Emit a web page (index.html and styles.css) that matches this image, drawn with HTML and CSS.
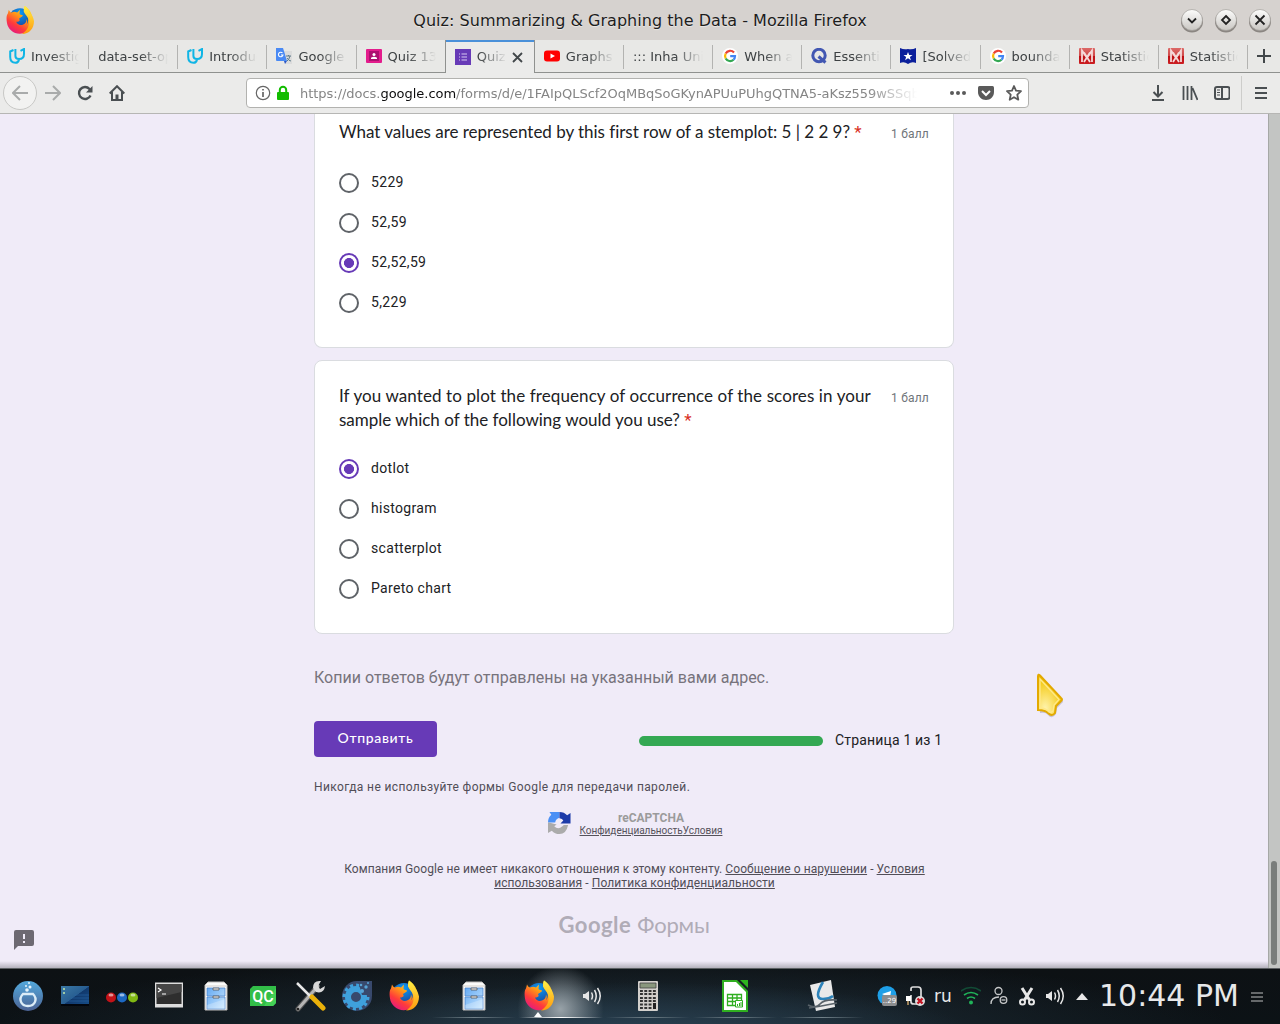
FILE: index.html
```html
<!DOCTYPE html>
<html lang="ru">
<head>
<meta charset="utf-8">
<title>Quiz: Summarizing &amp; Graphing the Data</title>
<link rel="stylesheet" href="styles.css">
</head>
<body>
<svg class="defs" aria-hidden="true">
  <defs>
    <linearGradient id="ffg" x1=".8" y1="0" x2=".2" y2="1"><stop offset="0" stop-color="#ffe733"/><stop offset=".4" stop-color="#ff9a16"/><stop offset=".7" stop-color="#ff3b3b"/><stop offset="1" stop-color="#e1148b"/></linearGradient>
    <linearGradient id="ffy" x1="0" y1="0" x2="0" y2="1"><stop offset="0" stop-color="#fff046"/><stop offset="1" stop-color="#ff980e"/></linearGradient>
    <radialGradient id="ffb" cx=".5" cy=".2" r=".8"><stop offset="0" stop-color="#0a9bf5"/><stop offset="1" stop-color="#20287e"/></radialGradient>
    <linearGradient id="btn" x1="0" y1="0" x2="0" y2="1"><stop offset="0" stop-color="#fdfdfc"/><stop offset="1" stop-color="#c9c6c2"/></linearGradient>
    <linearGradient id="blue" x1="0" y1="0" x2="0" y2="1"><stop offset="0" stop-color="#53a9dc"/><stop offset="1" stop-color="#4b6294"/></linearGradient>
    <linearGradient id="desk" x1="0" y1="0" x2="1" y2="1"><stop offset="0" stop-color="#3b79a6"/><stop offset=".5" stop-color="#285e91"/><stop offset=".52" stop-color="#11396d"/><stop offset="1" stop-color="#174e88"/></linearGradient>
    <linearGradient id="drawer" x1="0" y1="0" x2="1" y2="1"><stop offset="0" stop-color="#64a9f2"/><stop offset="1" stop-color="#c9e7ff"/></linearGradient>
    <linearGradient id="mred" x1="0" y1="0" x2="0" y2="1"><stop offset="0" stop-color="#dc6a68"/><stop offset=".5" stop-color="#cf4747"/><stop offset=".52" stop-color="#bd0f14"/><stop offset="1" stop-color="#cc1f22"/></linearGradient>
    <radialGradient id="gold" cx=".3" cy=".85" r=".8"><stop offset="0" stop-color="#fff4b0"/><stop offset="1" stop-color="#f3c400"/></radialGradient>
    <symbol id="firefox" viewBox="0 0 30 30">
      <circle cx="15" cy="15.500" r="13" fill="url(#ffb)"/>
      <path d="M3 4c1 2 2 3 3 3 2-1 4-1 6 0l3-3c0 2-1 4 0 5l3 1c0 2-3 2-4 4 2 2-1 3-3 3 1 3 4 4 7 3 3-1 4-3 4-6 1 2 1 4 0 6 3-4 2-9-1-12-2-2-2-5-1-8 5 3 7 7 8 11 2 8-2 15-9 18C11 32 2 26 1 18 0 12 1 9 2 8z" fill="url(#ffg)"/>
      <path d="M20 0c3 2 5 5 6 8 2 1 3 4 4 8 0 8-5 14-13 14 6-4 9-9 7-16-1-3-4-5-5-8 0-2 0-4 1-6z" fill="url(#ffy)"/>
    </symbol>
    <symbol id="udacity" viewBox="0 0 16 16"><path d="M4.500 2 1.200 3.500V9q0 5.800 5.300 5.800 3 0 3.500-3.300M6.400 1v7q0 3 3.600 3 5 0 5-5V1l-3.500 1.800" fill="none" stroke="#10b5e5" stroke-width="2"/></symbol>
    <symbol id="google" viewBox="0 0 16 16"><circle cx="8" cy="8" r="8" fill="#fff"/><g fill="none" stroke-width="2.200"><path d="M12 4.500A5 5 0 0 0 3.700 5.600" stroke="#ea4335"/><path d="M3.700 5.600a5 5 0 0 0 0 4.800" stroke="#fbbc05"/><path d="M3.700 10.400a5 5 0 0 0 7.800 1.300" stroke="#34a853"/><path d="M11.500 11.700A5 5 0 0 0 13 8.200H8.200" stroke="#4285f4"/></g></symbol>
    <symbol id="mathred" viewBox="0 0 16 16"><rect width="16" height="16" rx="1" fill="url(#mred)"/><path d="M3 14V2.500L8 10l5-7.500V14M5 14l6-9.500M11 14 5 4.500" fill="none" stroke="#f5dada" stroke-width="1.800"/></symbol>
    <symbol id="cabinet" viewBox="0 0 24 30"><path d="M1 4 4 1h16l3 3v25H1z" fill="#fbfbfa" stroke="#bcbab8"/><path d="M2 5h20" stroke="#d4d0cc"/><path d="M3 7h18v8H3zM3 16h18v12H3z" fill="url(#drawer)" stroke="#4680c8" stroke-width=".7"/><path d="M3 24 21 18v10H3z" fill="#fff" opacity=".25"/><path d="M9 7v2h6V7zM9 15v2h6v-2z" fill="#eee" stroke="#555" stroke-width=".8"/></symbol>
    <symbol id="speaker" viewBox="0 0 20 20"><path d="M1 8h2l4-3v10l-4-3H1z" fill="#e6e6e6"/><g fill="none" stroke="#e6e6e6" stroke-width="1.500"><path d="M9.500 6.500q2 3.500 0 7M12.500 4q3.500 6 0 12M15.500 2q5.500 8 0 16"/></g></symbol>
  </defs>
</svg>
<div class="screen">
  <header class="titlebar">
    <svg class="app-icon" width="28" height="28"><use href="#firefox"/></svg>
    <div class="window-title">Quiz: Summarizing &amp; Graphing the Data - Mozilla Firefox</div>
    <div class="window-buttons">
      <svg viewBox="0 0 24 25"><ellipse cx="12" cy="13.500" rx="11" ry="11" fill="#8b8682"/><circle cx="12" cy="12" r="10.500" fill="url(#btn)" stroke="#a19d99" stroke-width=".7"/><path d="m8 10.500 4 4 4-4" class="glyph"/></svg>
      <svg viewBox="0 0 24 25"><ellipse cx="12" cy="13.500" rx="11" ry="11" fill="#8b8682"/><circle cx="12" cy="12" r="10.500" fill="url(#btn)" stroke="#a19d99" stroke-width=".7"/><path d="m12 8 4 4-4 4-4-4z" class="glyph"/></svg>
      <svg viewBox="0 0 24 25"><ellipse cx="12" cy="13.500" rx="11" ry="11" fill="#8b8682"/><circle cx="12" cy="12" r="10.500" fill="url(#btn)" stroke="#a19d99" stroke-width=".7"/><path d="m7.500 7.500 9 9m0-9-9 9" class="glyph"/></svg>
    </div>
  </header>
  <nav class="tabs">
    <div class="tab"><svg><use href="#udacity"/></svg><span>Investig</span></div>
    <div class="tab"><span>data-set-op</span></div>
    <div class="tab"><svg><use href="#udacity"/></svg><span>Introduc</span></div>
    <div class="tab"><svg viewBox="0 0 16 16"><path d="M6 3h10v13H9z" fill="#dcdcdc"/><path d="M0 0h7l4 13H1a1 1 0 0 1-1-1z" fill="#4a8af4"/><path d="M8 13h3l-2 3z" fill="#2a56c6"/><path d="M6.500 5A2.300 2.300 0 1 0 7 7H5" fill="none" stroke="#fff" stroke-width="1.100"/><path d="M10 8h5m-2.500-1v1M14 8q-1 4-3 5m0-3q2 3 4 3" fill="none" stroke="#607d8b"/></svg><span>Google</span></div>
    <div class="tab last-before"><svg viewBox="0 0 16 16"><rect y="1" width="16" height="14" rx="1" fill="#e31c8c"/><path d="M3 3h10v10H3z" fill="#ad1070"/><circle cx="8" cy="6.500" r="1.500" fill="#fff"/><path d="M5 11V9.800Q8 7.500 11 9.800V11z" fill="#fff"/></svg><span>Quiz 13</span></div>
    <div class="tab active"><svg viewBox="0 0 16 16"><path d="M0 0h16v16H0z" fill="#673ab7"/><path d="M4 5h1m1.500 0H12M4 8h1m1.500 0H12M4 11h1m1.500 0H12" stroke="#d8c8f3" stroke-width="1.200"/></svg><span>Quiz:</span><svg class="close" viewBox="0 0 16 16"><path d="m4 4 9 9m0-9-9 9"/></svg></div>
    <div class="tab"><svg viewBox="0 0 16 16"><rect y="2.500" width="16" height="11" rx="3" fill="#f00"/><path d="m6.500 5.500 4.500 2.500-4.500 2.500z" fill="#fff"/></svg><span>Graphs:</span></div>
    <div class="tab"><span>::: Inha Univ</span></div>
    <div class="tab"><svg><use href="#google"/></svg><span>When a</span></div>
    <div class="tab"><svg viewBox="0 0 16 16"><circle cx="8" cy="7.500" r="6.200" fill="none" stroke="#4257b2" stroke-width="3"/><path d="m7.500 8.500 7 6" stroke="#4257b2" stroke-width="3"/></svg><span>Essentia</span></div>
    <div class="tab"><svg viewBox="0 0 16 16"><path d="M0 0q4 2 8 1 4 1 8-1v15q-4-2-8 1-4-3-8-1z" fill="#0b1f9b"/><path d="m8 4 1.200 3h3.300l-2.600 2 1 3.200L8 10.300l-2.900 1.900 1-3.200-2.600-2h3.300z" fill="#fff"/></svg><span>[Solved]</span></div>
    <div class="tab"><svg><use href="#google"/></svg><span>boundar</span></div>
    <div class="tab"><svg><use href="#mathred"/></svg><span>Statistic</span></div>
    <div class="tab"><svg><use href="#mathred"/></svg><span>Statistic</span></div>
    <div class="new-tab"><svg viewBox="0 0 16 16"><path d="M8 1v14M1 8h14"/></svg></div>
  </nav>
  <div class="toolbar">
    <div class="nav-buttons">
      <div class="back"><svg class="dim" viewBox="0 0 16 16"><path d="M16 8H1m7-7L1 8l7 7"/></svg></div>
      <svg class="dim" viewBox="0 0 16 16"><path d="M0 8h15M8 1l7 7-7 7"/></svg>
      <svg viewBox="0 0 16 16"><path d="M13.500 10.500A6 6 0 1 1 12.500 4l1.500 2" stroke-width="2.400"/><path d="M15.500 1v6.500H9z" fill="#4a4f52" stroke="none"/></svg>
      <svg viewBox="0 0 16 16"><path d="m.7 8.500 7.300-7.300 7.300 7.300M3 7v8h10V7"/><path d="M6.500 9.500h3V15h-3z" fill="#4a4f52" stroke="none"/></svg>
    </div>
    <div class="urlbar">
      <svg class="info" viewBox="0 0 16 16"><circle cx="8" cy="8" r="6.700"/><path d="M8 7v5M8 4v1.600" stroke-width="1.700"/></svg>
      <svg class="lock" viewBox="0 0 16 16"><rect x="2" y="7" width="12" height="8" rx="1" fill="#12bc00"/><path d="M4.800 8V5a3.200 3.200 0 0 1 6.400 0v3" fill="none" stroke="#12bc00" stroke-width="2"/></svg>
      <div class="url">https://docs.<b>google.com</b>/forms/d/e/1FAIpQLScf2OqMBqSoGKynAPUuPUhgQTNA5-aKsz559wSSqb</div>
      <div class="page-actions">
        <svg viewBox="0 0 16 16"><g fill="#5a5a5a"><circle cx="2" cy="8" r="2"/><circle cx="8" cy="8" r="2"/><circle cx="14" cy="8" r="2"/></g></svg>
        <svg viewBox="0 0 16 16"><path d="M0 2.500Q0 1 1.500 1h13Q16 1 16 2.500V7c0 4.500-3.500 8-8 8S0 11.500 0 7z" fill="#5a5a5a"/><path d="m4 6 4 4 4-4" fill="none" stroke="#fff" stroke-width="2"/></svg>
        <svg viewBox="0 0 16 16"><path d="m8 1 2 4.700 5 .5-3.700 3.500 1 5L8 12.200l-4.300 2.500 1-5L1 6.200l5-.5z" fill="none" stroke="#5a5a5a" stroke-width="1.800" stroke-linejoin="round"/></svg>
      </div>
    </div>
    <div class="tool-buttons">
      <svg viewBox="0 0 16 16"><path d="M8 0v11M3.500 7 8 11.500 12.500 7M2 15h12"/></svg>
      <svg viewBox="0 0 16 16"><path d="M1.500 1v14M5.500 1v14M9.500 1v14M10.500 3l5 12" stroke-width="1.800"/></svg>
      <svg viewBox="0 0 16 16"><rect x="1" y="2" width="14.500" height="12" rx="2"/><path d="M8 2v12"/><path d="M3 5h3M3 7.500h3M3 10h3" stroke-width="1"/></svg>
    </div>
    <div class="menu-button"><svg viewBox="0 0 16 16"><path d="M2 3h12M2 8h12M2 13h12"/></svg></div>
  </div>
  <div class="viewport">
    <main class="page">
      <div class="column">
        <section class="card first">
          <div class="question"><h2><span class="q1">What values are represented by this first row of a stemplot: 5 | 2 2 9?</span> <i>*</i></h2><span class="points">1 балл</span></div>
          <div class="option"><span class="radio"></span><span>5229</span></div>
          <div class="option"><span class="radio"></span><span>52,59</span></div>
          <div class="option"><span class="radio on"></span><span>52,52,59</span></div>
          <div class="option"><span class="radio"></span><span>5,229</span></div>
        </section>
        <section class="card second">
          <div class="question"><h2><span class="q2">If you wanted to plot the frequency of occurrence of the scores in your</span><br>sample which of the following would you use? <i>*</i></h2><span class="points">1 балл</span></div>
          <div class="option"><span class="radio on"></span><span>dotlot</span></div>
          <div class="option"><span class="radio"></span><span>histogram</span></div>
          <div class="option"><span class="radio"></span><span>scatterplot</span></div>
          <div class="option"><span class="radio"></span><span>Pareto chart</span></div>
        </section>
        <p class="copies">Копии ответов будут отправлены на указанный вами адрес.</p>
        <div class="submit-row">
          <button class="submit" type="button">Отправить</button>
          <div class="progress"></div>
          <span class="page-count">Страница 1 из 1</span>
        </div>
        <p class="warning">Никогда не используйте формы Google для передачи паролей.</p>
        <div class="captcha">
          <svg viewBox="0 0 24 24"><path d="M0 12Q0 7 3.500 4L1.500 1H12v6Q8 8 7.500 12z" fill="#4a90f5"/><path d="M12 1q5 0 8 3.500L23.500 2v11H13l3-3q-1-2-4-2.500z" fill="#1c3aa9"/><path d="M0 12h1l8 2-2.500 2q4 4 8.500 0l1.500-1.500h4.500Q19 24 12 24q-5 0-8-3.500L0 23z" fill="#ababab"/></svg>
          <div class="captcha-text"><b>reCAPTCHA</b><div><a>Конфиденциальность</a><a>Условия</a></div></div>
        </div>
        <p class="legal">Компания Google не имеет никакого отношения к этому контенту. <a>Сообщение о нарушении</a> - <a>Условия</a><br><a>использования</a> - <a>Политика конфиденциальности</a></p>
        <div class="brand"><b>Google</b><span>Формы</span></div>
      </div>
      <svg class="feedback" viewBox="0 0 20 20"><path d="M2 0h16q2 0 2 2v12q0 2-2 2H4l-4 4V2q0-2 2-2z" fill="#6d6972"/><path d="M10 4v5M10 11v2" stroke="#f0ebf8" stroke-width="2"/></svg>
      <svg class="pointer" viewBox="0 0 30 46"><path d="M4 4.500q0-3 2-1L26 25q2 1.500 0 3l-5 5-1 6q-4 6-8 1-2-3-8-2z" fill="#88839b" opacity=".4" transform="translate(1 2)"/><path d="M3 3.500q0-3 2-1L26 25q2 1.500 0 3l-5 5-1 7q-3 4-7 0-3-3-10-3z" fill="url(#gold)" stroke="#e3a900" stroke-width="2"/><path d="M5 6v29q6 0 9 4 2 1 4-1l1-6 5-5.500z" fill="none" stroke="#ffe98a" stroke-width="1.300"/></svg>
    </main>
    <div class="scrollbar"><div class="thumb"></div></div>
  </div>
  <footer class="panel">
    <div class="launchers">
      <svg viewBox="0 0 32 32"><circle cx="16" cy="16" r="15" fill="url(#blue)"/><path d="M11 14h10c5 5 2 12-5 12s-10-7-5-12z" fill="none" stroke="#dcecf7" stroke-width="2.400"/><g fill="#e5f3fb"><circle cx="15" cy="10" r="1.800"/><circle cx="18" cy="7" r="1.500"/><circle cx="14" cy="6" r="1"/><circle cx="17" cy="3" r="1"/></g></svg>
      <svg viewBox="0 0 32 32"><path d="M2 6h28v20H2z" fill="url(#desk)"/><path d="M2 24h28v2H2z" fill="#02060d"/><path d="M4 9h2M4 13h2" stroke="#9fc9a5" stroke-width="2"/><path d="M12 18h18M9 21h21M15 15h15" stroke="#2a64a5" stroke-width=".6"/></svg>
      <svg viewBox="0 0 32 32"><circle cx="5" cy="17.500" r="5" fill="#c21218"/><circle cx="16" cy="17.500" r="5" fill="#1c68c2"/><circle cx="27" cy="17.500" r="5" fill="#80b913"/><g fill="#fff" opacity=".55"><ellipse cx="5" cy="15" rx="2.500" ry="1.500"/><ellipse cx="16" cy="15" rx="2.500" ry="1.500"/><ellipse cx="27" cy="15" rx="2.500" ry="1.500"/></g></svg>
      <svg viewBox="0 0 32 32"><path d="M2 2.500h28v25H2z" fill="#ddd"/><path d="M3.500 4h25v20h-25z" fill="#2e2e2e"/><path d="M3.500 4h25v8L3.500 18z" fill="#454545"/><path d="m5 8 3 2-3 2M9 14h4" fill="none" stroke="#fff" stroke-width="1.200"/></svg>
      <svg viewBox="0 0 32 32"><use href="#cabinet" x="4" y="1" width="24" height="30"/></svg>
      <svg viewBox="0 0 32 32"><path d="M6 6h23v17l-3 3H3V9z" fill="#32be48"/><path d="M29 6v17l-3 3H17L29 8z" fill="#43cf55"/><text x="16" y="21.500" text-anchor="middle" class="qc">QC</text></svg>
      <svg viewBox="0 0 32 32"><path d="m4 29 19-22" stroke="#555" stroke-width="5" stroke-linecap="round"/><path d="m4 29 20-23" stroke="#b5b5b5" stroke-width="3" stroke-linecap="round"/><path d="M27 1q-8-1-8 7l3 4q8 2 9-6l-5 3-2-3z" fill="#d8d8d8"/><path d="M3 3 18 18" stroke="#e8e8e8" stroke-width="2.500"/><path d="m18 17 11 11" stroke="#eab10a" stroke-width="5" stroke-linecap="round"/><circle cx="4" cy="29" r="1.300" fill="#222"/></svg>
      <svg viewBox="0 0 32 32"><path d="M16 1h13q2 0 2 2v13A15 15 0 1 1 16 1z" fill="#38496d"/><circle cx="15" cy="17" r="8" fill="none" stroke="#3fa0dc" stroke-width="6"/><circle cx="15" cy="17" r="11.500" fill="none" stroke="#3fa0dc" stroke-width="4" stroke-dasharray="3 3"/><path d="M17 1h14v14H21z" fill="#38496d"/><g fill="#57a3d6"><circle cx="21" cy="11" r="2"/><circle cx="25" cy="7" r="1.700"/><circle cx="20" cy="5" r="1.300"/><circle cx="27" cy="3" r="1"/></g></svg>
      <svg viewBox="0 0 32 32"><use href="#firefox" x="1" y="0" width="30" height="31"/></svg>
    </div>
    <div class="tasks">
      <div class="task"><svg viewBox="0 0 32 32"><use href="#cabinet" x="4" y="1" width="24" height="30"/></svg></div>
      <div class="task current"><svg viewBox="0 0 32 32"><use href="#firefox" x="1" y="0" width="30" height="31"/></svg><svg class="audio"><use href="#speaker"/></svg></div>
      <div class="task"><svg viewBox="0 0 32 32"><rect x="6" y="1" width="20" height="30" rx="1" fill="#d3d0cc"/><path d="M8 3h16v5H8z" fill="#89977d" stroke="#444" stroke-width=".8"/><path d="M8 11h16M8 14h16M8 18h16M8 21h16M8 24.500h12M8 28h12" stroke="#333" stroke-width="1.800" stroke-dasharray="2.900 1.400"/><path d="M21 23h3v6h-3z" fill="#222"/></svg></div>
      <div class="task"><svg viewBox="0 0 32 32"><path d="M3 0h15l11 11v21H3z" fill="#2fae20"/><path d="M5 2h12l10 10v18H5z" fill="#fff"/><path d="M21 0h8v8z" fill="#2eb41f"/><path d="M8.500 14.500h14v11h-14zM8 18h15M8 21.500h15M13.500 14v12M18 14v8" fill="none" stroke="#2fae20" stroke-width="1.300"/><path d="M16.500 20.500h7v6.500h-7z" fill="#fff" stroke="#2fae20"/><path d="M18.500 26v-2M20.500 26v-3M22 26v-4" stroke="#2fae20"/></svg></div>
      <div class="task"><svg viewBox="0 0 32 32"><path d="m4 5 21-5 4 27-19 4z" fill="#e9e9e9"/><path d="M17 2Q7 19 17 19q6 0 10-3" fill="none" stroke="#2c82b9" stroke-width="2.600"/><path d="M2 25q8 4 12-1t17-4M3 28q8-1 28-5" fill="none" stroke="#596269" stroke-width="1.600"/></svg></div>
    </div>
    <div class="tray">
      <svg viewBox="0 0 20 20"><circle cx="10" cy="9.500" r="9.500" fill="#1e9fe7"/><path d="m5 8 9-3-1 7z" fill="#fff"/><rect x="5" y="9" width="15" height="11" rx="2" fill="#8b8d8f"/><text x="12.500" y="17" text-anchor="middle" class="badge">..29</text></svg>
      <svg viewBox="0 0 20 20"><path d="M6 5V3q0-2 2-2h5q3 0 3 3v9M6 9v7q0 2 3 2h3" fill="none" stroke="#ddd" stroke-width="1.700"/><path d="M1 10h5v5H1z" fill="#fff"/><path d="M3 15v4" stroke="#c9a36a" stroke-width="1.500"/><circle cx="15" cy="15" r="5" fill="#ddd"/><path d="m12.500 12.500 5 5m0-5-5 5" stroke="#c41322" stroke-width="2.400"/></svg>
      <span class="lang">ru</span>
      <svg viewBox="0 0 20 20"><g fill="none" stroke-width="1.600"><path d="M0 5Q10-2 20 5" stroke="#124c36"/><path d="M3 9q7-5 14 0M6 12.500q4-3 8 0" stroke="#20b459"/></g><circle cx="10" cy="16.500" r="2" fill="#20b459"/></svg>
      <svg viewBox="0 0 20 20"><g fill="none" stroke="#c7c9ca" stroke-width="1.300"><circle cx="9.500" cy="5" r="3.500"/><path d="M2 18q0-7 8-7"/><circle cx="14.500" cy="14" r="3.300"/><path d="M12.500 14h4"/></g></svg>
      <svg viewBox="0 0 20 20"><path d="M5 2 12.500 14M15 2 7.500 14" stroke="#e8e8e8" stroke-width="3"/><g fill="none" stroke="#e8e8e8" stroke-width="2"><circle cx="5.500" cy="16" r="2.500"/><circle cx="14.500" cy="16" r="2.500"/></g></svg>
      <svg><use href="#speaker"/></svg>
    </div>
    <svg class="expand" viewBox="0 0 12 7"><path d="m0 7 6-7 6 7z" fill="#e8e8e8"/></svg>
    <div class="clock">10:44 PM</div>
    <svg class="panel-menu" viewBox="0 0 12 10"><path d="M0 1h12M0 5h12M0 9h12" stroke="#828587" stroke-width="1.700"/></svg>
  </footer>
</div>
</body>
</html>
```
FILE: styles.css
```css
* { box-sizing: border-box; }
body { margin: 0; overflow: hidden; font-family: Roboto, sans-serif; }
svg { display: block; flex: none; }
.defs { position: absolute; width: 0; height: 0; }
.screen { width: 1280px; height: 1024px; display: flex; flex-direction: column; }

.titlebar { height: 40px; flex: none; display: grid; grid-template-columns: 120px 1fr 120px; align-items: center; padding: 0 6px; background: #d6d2cf; font-family: "DejaVu Sans", sans-serif; }
.window-title { text-align: center; font-size: 16px; letter-spacing: .03px; color: #1d1d1d; text-shadow: 0 1px 1px #fff8; white-space: nowrap; }
.window-buttons { display: flex; justify-content: flex-end; gap: 10px; padding-right: 2px; }
.window-buttons svg { width: 24px; height: 25px; }
.glyph { fill: none; stroke: #222; stroke-width: 1.8; }

.tabs { height: 33px; flex: none; display: flex; background: #e8e8e6; border-bottom: 1px solid #8f918f; font-family: "DejaVu Sans", sans-serif; font-size: 13px; color: #3d4143; }
.tab { width: 89.15px; flex: none; display: flex; align-items: center; gap: 6px; padding: 0 10px 0 9px; background: linear-gradient(#b3b3b1, #b3b3b1) right 5px / 1px 24px no-repeat; }
.tab svg { width: 16px; height: 16px; }
.tab span { flex: 1; min-width: 0; overflow: hidden; white-space: nowrap; mask-image: linear-gradient(to right, #000 calc(100% - 28px), #0000); }
.tab.last-before { background: none; }
.tab.active { width: 90.15px; height: 33px; margin-left: -1px; padding-right: 9px; border: 1px solid #8f918f; border-width: 0 1px; background: linear-gradient(#4a90d9, #4a90d9) top / 100% 2px no-repeat #ebebea; }
.tab .close { width: 16px; margin-left: -4px; }
.close path { stroke: #42474a; stroke-width: 1.8; }
.new-tab { flex: 1; display: grid; place-items: center; }
.new-tab svg { width: 16px; height: 16px; stroke: #42474a; stroke-width: 2; }

.toolbar { height: 41px; flex: none; display: flex; align-items: center; background: #ebebea; border-bottom: 1px solid #b6b6b4; }
.toolbar svg { width: 16px; height: 16px; fill: none; stroke: #4a4f52; stroke-width: 2; }
.toolbar svg.dim { stroke: #a9abab; }
.nav-buttons { width: 246px; padding-left: 3px; display: flex; align-items: center; gap: 16px; }
.back { width: 34px; height: 34px; margin-right: -8px; border: 1px solid #c8c8c6; border-radius: 50%; background: #f2f2f1; display: grid; place-items: center; }
.urlbar { width: 783px; height: 30px; border: 1px solid #b2b2af; border-radius: 4px; background: #fff; display: flex; align-items: center; padding: 0 6px 0 8px; }
.toolbar .info { stroke: #666; stroke-width: 1.2; }
.toolbar .lock { margin-left: 4px; stroke: none; }
.url { width: 617px; margin-left: 9px; overflow: hidden; white-space: nowrap; font: 13px "DejaVu Sans", sans-serif; letter-spacing: -.03px; color: #858585; mask-image: linear-gradient(to right, #000 calc(100% - 50px), #0000); }
.url b { font-weight: 400; color: #0c0c0d; }
.page-actions { margin-left: auto; display: flex; gap: 12px; }
.page-actions svg { stroke: none; }
.tool-buttons { margin-left: auto; display: flex; gap: 16px; padding-right: 11px; }
.menu-button { height: 34px; width: 39px; border-left: 1px solid #cdcdcb; display: grid; place-items: center; }

.viewport { height: 854px; flex: none; display: flex; overflow: hidden; }
.page { width: 1268px; position: relative; background: linear-gradient(#b4b1bc00, #b4b1bc) bottom / 100% 7px no-repeat #f0ebf8; }
.column { width: 640px; margin-left: 314px; }
.scrollbar { width: 12px; border-left: 1px solid #a6a8a6; background: #c3c5c3; display: flex; align-items: flex-end; padding: 0 2px 3px; }
.thumb { width: 6px; height: 104px; border-radius: 3px; background: #797d7b; }
.card { background: #fff; border: 1px solid #dadce0; border-radius: 8px; padding: 24px; color: #202124; }
.card.first { height: 234px; border-top: 0; border-radius: 0 0 8px 8px; padding-top: 7px; }
.card.second { height: 274px; margin-top: 12px; }
.question { display: flex; justify-content: space-between; align-items: flex-start; margin-bottom: 16px; }
h2 { margin: -1px 0 1px; font: 400 17px/24px Lato, "Noto Sans", sans-serif; white-space: nowrap; }
h2 i { color: #d93025; font: 400 17px/20px Roboto, sans-serif; }
.q1 { letter-spacing: -.03px; }
.q2 { letter-spacing: .1px; }
.points { font-size: 12px; line-height: 26px; letter-spacing: .2px; color: #70757a; white-space: nowrap; }
.option { height: 40px; display: flex; align-items: center; gap: 12px; font-size: 14px; letter-spacing: .32px; }
.option > span:last-child { padding-bottom: 2px; }
.radio { width: 20px; height: 20px; border: 2px solid #5f6368; border-radius: 50%; }
.radio.on { border-color: #673ab7; background: radial-gradient(circle, #673ab7 4.7px, #fff 5.3px); }
p { margin: 0; white-space: nowrap; }
.copies { margin-top: 32px; height: 24px; font-size: 16px; line-height: 24px; letter-spacing: .01px; color: #77737c; }
.submit-row { margin-top: 31px; height: 36px; display: flex; align-items: center; }
.submit { width: 123px; height: 36px; border: 0; border-radius: 4px; padding: 0 0 4px; background: #673ab7; color: #fff; font: 500 14px Lato, sans-serif; letter-spacing: .65px; }
.progress { width: 184px; height: 10px; margin: 4px 12px 0 202px; border-radius: 5px; background: #34a853; }
.page-count { padding-top: 1px; font-size: 14px; letter-spacing: .17px; color: #202124; white-space: nowrap; }
.warning { margin-top: 22px; font-size: 12px; line-height: 16px; letter-spacing: .37px; color: #514e57; }
.captcha { height: 30px; margin-top: 14px; display: flex; justify-content: center; align-items: flex-start; gap: 9px; padding-left: 2px; }
.captcha svg { width: 23px; height: 23px; margin-top: 2px; }
.captcha-text { font-size: 10px; line-height: 12px; text-align: center; color: #55525b; }
.captcha-text b { display: block; font-size: 12px; line-height: 14px; padding-top: 2px; font-weight: 700; color: #9b9b9b; height: 16px; }
a { text-decoration: underline; }
.legal { margin-top: 23px; padding-left: 1px; font-size: 12px; line-height: 14px; letter-spacing: .08px; text-align: center; color: #514e57; }
.brand { margin-top: 20px; height: 30px; display: flex; justify-content: center; align-items: center; gap: 6px; color: #b0acb7; font: 22px/30px Lato, sans-serif; }
.brand b { font-weight: 700; letter-spacing: .5px; }
.brand span { letter-spacing: -.2px; }
.feedback { position: absolute; left: 14px; top: 816px; width: 20px; height: 20px; }
.pointer { position: absolute; left: 1035px; top: 559px; width: 30px; height: 46px; }

.panel { height: 56px; display: flex; align-items: center; border-top: 1px solid #5c6063; color: #e7e8e9; background: radial-gradient(ellipse 330px 50px at 50% 115%, #283f50, #0000), radial-gradient(ellipse 620px 75px at 48% 110%, #20303b, #0000), linear-gradient(#0d1114, #0c1216); font-family: "DejaVu Sans", sans-serif; }
.launchers { width: 430px; display: flex; gap: 15px; padding: 0 0 2px 12px; }
.launchers svg, .task svg { width: 32px; height: 32px; }
.tasks { display: flex; width: 435px; height: 55px; }
.task { width: 87px; display: flex; align-items: center; justify-content: center; padding-bottom: 2px; background: linear-gradient(to right, #0000, #73828a 50%, #0000) center 48px / 84px 1px no-repeat; }
.task.current { position: relative; gap: 27px; padding-right: 4px; background: linear-gradient(to right, #0000, #fff 50%, #0000) center 48px / 84px 1px no-repeat, radial-gradient(ellipse 43px 44px at 50% 82%, #98a2a8, #0000) top / 100% 49px no-repeat; }
.task.current::after { content: ""; position: absolute; left: 17px; bottom: 7px; border: 4px solid #0000; border-top: 0; border-bottom: 5px solid #fff; }
.task .audio { width: 20px; height: 20px; margin-right: -7px; }
.tray { width: 204px; padding: 0 0 1px 12px; display: flex; align-items: center; gap: 8px; }
.tray svg { width: 20px; height: 20px; }
.lang { width: 20px; display: flex; justify-content: center; font-size: 17px; }
.expand { width: 12px; height: 7px; margin-left: 7px; }
.clock { width: 144px; margin-left: 11px; padding-bottom: 2px; font-size: 30px; line-height: 54px; white-space: nowrap; }
.panel-menu { width: 12px; height: 10px; margin-left: auto; margin-right: 17px; }
.qc { font: 500 16px Roboto, sans-serif; fill: #fff; }
.badge { font: 7px "DejaVu Sans", sans-serif; fill: #fff; }
```
